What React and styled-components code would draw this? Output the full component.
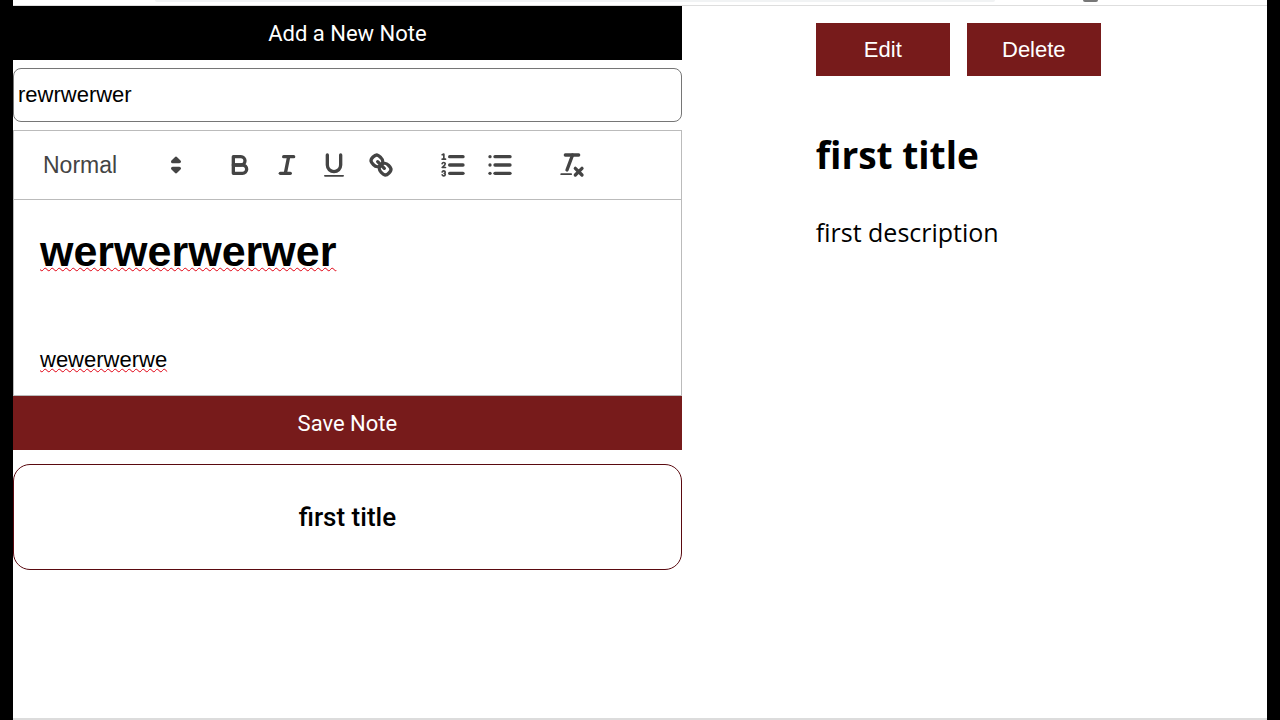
import React from "react";
import { useState } from "react";
import styled, { createGlobalStyle } from "styled-components";

export default function App() {
  const [title, setTitle] = useState("rewrwerwer");
  const [format, setFormat] = useState("Normal");

  return (
    <>
      <GlobalStyle />
      <Page>
        <BrowserEdge>
          <AddressBar />
          <ToolbarMark />
        </BrowserEdge>
        <Content>
          <Sidebar>
            <BarButton type="button" $color="#000">
              Add a New Note
            </BarButton>
            <TitleInput
              type="text"
              aria-label="Note title"
              value={title}
              onChange={(e) => setTitle(e.target.value)}
            />
            <EditorToolbar>
              <FormatPicker>
                <select
                  aria-label="Text format"
                  value={format}
                  onChange={(e) => setFormat(e.target.value)}
                >
                  <option>Normal</option>
                </select>
                <PickerArrows />
              </FormatPicker>
              <ToolGroup>
                {inlineTools.map((tool) => (
                  <Tool key={tool.label} {...tool} />
                ))}
              </ToolGroup>
              <ToolGroup>
                {listTools.map((tool) => (
                  <Tool key={tool.label} {...tool} />
                ))}
              </ToolGroup>
              <ToolGroup>
                <Tool {...cleanTool} />
              </ToolGroup>
            </EditorToolbar>
            <EditorBody
              contentEditable
              suppressContentEditableWarning
              spellCheck={false}
              role="textbox"
              aria-label="Note text"
            >
              <h1>
                <Misspelled>werwerwerwer</Misspelled>
              </h1>
              <p>
                <br />
              </p>
              <p>
                <Misspelled>wewerwerwe</Misspelled>
              </p>
            </EditorBody>
            <BarButton type="button" $color="#771b1b">
              Save Note
            </BarButton>
            <NoteCard>
              <h3>first title</h3>
            </NoteCard>
          </Sidebar>
          <NoteView>
            <Actions>
              <ActionButton type="button">Edit</ActionButton>
              <ActionButton type="button">Delete</ActionButton>
            </Actions>
            <NoteTitle>first title</NoteTitle>
            <NoteText>first description</NoteText>
          </NoteView>
        </Content>
      </Page>
    </>
  );
}

function Tool({ label, icon }) {
  return (
    <ToolButton type="button" aria-label={label}>
      <Icon viewBox="0 0 18 18">{icon}</Icon>
    </ToolButton>
  );
}

function PickerArrows() {
  return (
    <Icon viewBox="0 0 18 18">
      <polygon className="solid" points="7 11 9 13 11 11 7 11" />
      <polygon className="solid" points="7 7 9 5 11 7 7 7" />
    </Icon>
  );
}

const inlineTools = [
  {
    label: "Bold",
    icon: (
      <>
        <path d="M5,4H9.5A2.5,2.5,0,0,1,12,6.5v0A2.5,2.5,0,0,1,9.5,9H5V4Z" />
        <path d="M5,9h5.5A2.5,2.5,0,0,1,13,11.5v0A2.5,2.5,0,0,1,10.5,14H5V9Z" />
      </>
    ),
  },
  {
    label: "Italic",
    icon: (
      <>
        <line x1="7" x2="13" y1="4" y2="4" />
        <line x1="5" x2="11" y1="14" y2="14" />
        <line x1="8" x2="10" y1="14" y2="4" />
      </>
    ),
  },
  {
    label: "Underline",
    icon: (
      <>
        <path d="M5,3V9a4.012,4.012,0,0,0,4,4H9a4.012,4.012,0,0,0,4-4V3" />
        <rect className="fill" height="1" rx="0.5" width="12" x="3" y="15" />
      </>
    ),
  },
  {
    label: "Link",
    icon: (
      <>
        <line x1="7" x2="11" y1="7" y2="11" />
        <path d="M8.9,4.577a3.476,3.476,0,0,1,.36,4.679A3.476,3.476,0,0,1,4.577,8.9C3.185,7.5,2.035,6.4,4.217,4.217S7.5,3.185,8.9,4.577Z" />
        <path d="M13.423,9.1a3.476,3.476,0,0,0-4.679-.36,3.476,3.476,0,0,0,.36,4.679c1.392,1.392,2.5,2.542,4.679.36S14.815,10.5,13.423,9.1Z" />
      </>
    ),
  },
];

const listTools = [
  {
    label: "Numbered list",
    icon: (
      <>
        <line x1="7" x2="15" y1="4" y2="4" />
        <line x1="7" x2="15" y1="9" y2="9" />
        <line x1="7" x2="15" y1="14" y2="14" />
        <path className="thin" d="M2.5,5.5h2M2.5,2.8l1,-0.4V5.5" />
        <path
          className="thin"
          d="M4.5,10.5h-2c0-.234,1.85-1.076,1.85-2.234A0.959,0.959,0,0,0,2.5,8.156"
        />
        <path
          className="thin"
          d="M2.5,14.846a0.959,0.959,0,0,0,1.85-.109A0.7,0.7,0,0,0,3.75,14a0.688,0.688,0,0,0,.6-0.736,0.959,0.959,0,0,0-1.85-.109"
        />
      </>
    ),
  },
  {
    label: "Bulleted list",
    icon: (
      <>
        <line x1="6" x2="15" y1="4" y2="4" />
        <line x1="6" x2="15" y1="9" y2="9" />
        <line x1="6" x2="15" y1="14" y2="14" />
        <line x1="3" x2="3" y1="4" y2="4" />
        <line x1="3" x2="3" y1="9" y2="9" />
        <line x1="3" x2="3" y1="14" y2="14" />
      </>
    ),
  },
];

const cleanTool = {
  label: "Clear formatting",
  icon: (
    <>
      <line x1="5" x2="13" y1="3" y2="3" />
      <line x1="6" x2="9.35" y1="12" y2="3" />
      <line x1="11" x2="15" y1="11" y2="15" />
      <line x1="15" x2="11" y1="11" y2="15" />
      <rect className="fill" height="1" rx="0.5" width="7" x="2" y="14" />
    </>
  ),
};

const GlobalStyle = createGlobalStyle`
  * {
    box-sizing: border-box;
  }
  body {
    margin: 0;
    background: #000;
    color: #000;
    font-family: "Liberation Sans", Arial, sans-serif;
  }
`;

const Page = styled.div`
  display: flex;
  flex-direction: column;
  min-height: 100vh;
  margin: 0 13px;
  background: #fff;
  border-bottom: 2px solid #dcdcdc;
`;

const BrowserEdge = styled.div`
  display: flex;
  gap: 88px;
  height: 6px;
  padding: 0 169px 0 142px;
  border-bottom: 1px solid #dedede;
`;

const AddressBar = styled.div`
  flex: 1;
  height: 2px;
  background: #f1f3f4;
  border-radius: 0 0 8px 8px;
`;

const ToolbarMark = styled.div`
  width: 15px;
  height: 2px;
  background: #777;
  border-radius: 0 0 2px 2px;
`;

const Content = styled.main`
  display: grid;
  grid-template-columns: 8fr 7fr;
`;

const Sidebar = styled.section`
  display: flex;
  flex-direction: column;
`;

const BarButton = styled.button`
  height: 54px;
  padding: 0;
  border: none;
  background: ${({ $color }) => $color};
  color: #fff;
  font-family: Roboto, sans-serif;
  font-size: 22px;
  cursor: pointer;
`;

const TitleInput = styled.input`
  height: 54px;
  margin: 8px 0;
  padding: 0 4px;
  border: 1px solid #767676;
  border-radius: 8px;
  background: #fff;
  color: #000;
  font-family: inherit;
  font-size: 22px;
`;

const EditorToolbar = styled.div`
  display: flex;
  align-items: center;
  gap: 25px;
  padding: 14px;
  border: 1px solid #bbb;
`;

const FormatPicker = styled.div`
  position: relative;
  width: 163px;
  height: 40px;
  select {
    width: 100%;
    height: 100%;
    padding: 0 15px;
    border: none;
    appearance: none;
    background: transparent;
    color: #444;
    font-family: inherit;
    font-size: 23px;
  }
  svg {
    position: absolute;
    top: 5px;
    right: 0;
    pointer-events: none;
  }
`;

const ToolGroup = styled.div`
  display: flex;
`;

const ToolButton = styled.button`
  display: flex;
  align-items: center;
  justify-content: center;
  width: 47px;
  height: 40px;
  padding: 0;
  border: none;
  background: none;
  cursor: pointer;
`;

const Icon = styled.svg`
  width: 30px;
  height: 30px;
  fill: none;
  stroke: #444;
  stroke-width: 2;
  stroke-linecap: round;
  stroke-linejoin: round;
  .thin {
    stroke-width: 1;
  }
  .solid {
    fill: #444;
  }
  .fill {
    fill: #444;
    stroke: none;
  }
`;

const EditorBody = styled.div`
  padding: 20px 26px;
  border: 1px solid #bbb;
  border-top: none;
  outline: none;
  h1 {
    margin: 0;
    font-size: 43px;
    line-height: 62px;
  }
  p {
    margin: 0;
    font-size: 22px;
    line-height: 31px;
  }
  p:last-child {
    margin-top: 31px;
  }
`;

const Misspelled = styled.span`
  text-decoration: underline wavy #e00010 1px;
  text-decoration-skip-ink: none;
  text-underline-offset: 1px;
`;

const NoteCard = styled.article`
  display: flex;
  align-items: center;
  justify-content: center;
  height: 106px;
  margin-top: 14px;
  border: 1px solid #5a0a10;
  border-radius: 17px;
  cursor: pointer;
  h3 {
    margin: 0;
    font-family: Roboto, sans-serif;
    font-size: 26px;
    font-weight: 500;
  }
`;

const NoteView = styled.section`
  padding: 17px 134px;
  font-family: "Open Sans", "Noto Sans", sans-serif;
`;

const Actions = styled.div`
  display: flex;
  gap: 17px;
`;

const ActionButton = styled.button`
  width: 134px;
  height: 53px;
  padding: 0;
  border: none;
  background: #771b1b;
  color: #fff;
  font-family: "Liberation Sans", Arial, sans-serif;
  font-size: 22px;
  cursor: pointer;
`;

const NoteTitle = styled.h1`
  margin: 52px 0 0;
  font-size: 37px;
  line-height: 54px;
`;

const NoteText = styled.p`
  margin: 32px 0 0;
  font-size: 25px;
  line-height: 36px;
`;
